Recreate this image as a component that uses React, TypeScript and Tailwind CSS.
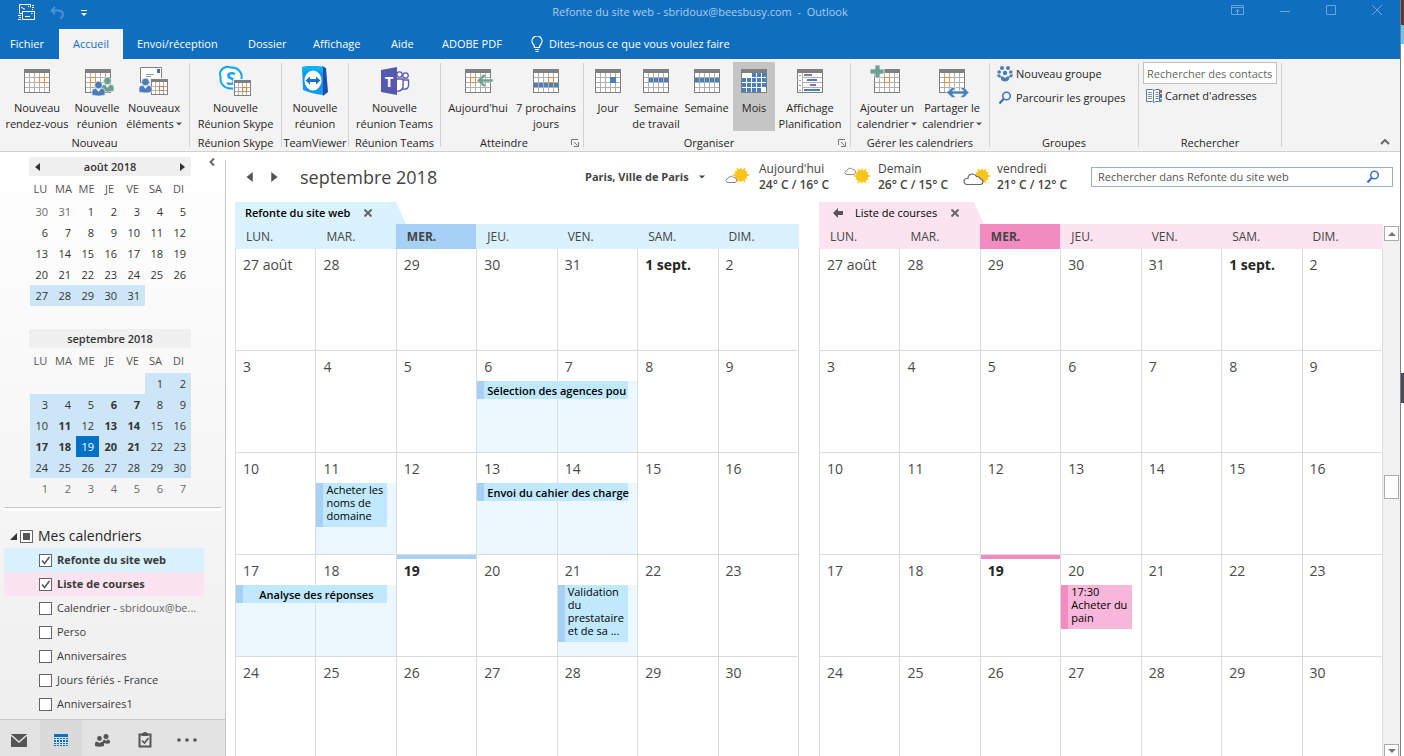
import { useState, type ReactNode } from "react";
import clsx from "clsx";

/* ---------- icons ---------- */

function Icon({ children }: { children: ReactNode }) {
  return (
    <svg viewBox="0 0 32 32" className="size-8 shrink-0 overflow-visible" aria-hidden="true">
      {children}
    </svg>
  );
}

function Sheet({ x = 3, y = 4 }: { x?: number; y?: number }) {
  return (
    <g shapeRendering="crispEdges">
      <rect x={x + 0.5} y={y + 0.5} width="25" height="23" fill="#fff" stroke="#7f7f7f" />
      <rect x={x} y={y} width="26" height="4" fill="#7f7f7f" />
      {[5, 10, 15, 20].map((n) => (
        <rect key={n} x={x + n} y={y + 4} width="1" height="19" fill="#b0b0b0" />
      ))}
      {[8, 13, 18].map((n) => (
        <rect key={n} x={x + 1} y={y + n} width="24" height="1" fill="#b0b0b0" />
      ))}
    </g>
  );
}

function SmallSheet({ x, y }: { x: number; y: number }) {
  return (
    <g shapeRendering="crispEdges">
      <rect x={x - 1} y={y - 1} width="19" height="18" fill="#f3f3f3" />
      <rect x={x + 0.5} y={y + 0.5} width="16" height="15" fill="#fff" stroke="#7f7f7f" />
      <rect x={x} y={y} width="17" height="3" fill="#7f7f7f" />
      {[4, 8, 12].map((n) => (
        <rect key={n} x={x + n} y={y + 3} width="1" height="12" fill="#b0b0b0" />
      ))}
      {[7, 11].map((n) => (
        <rect key={n} x={x + 1} y={y + n} width="15" height="1" fill="#b0b0b0" />
      ))}
      <rect x={x + 8.5} y={y + 7.5} width="4" height="4" fill="#fff" stroke="#e07b39" />
    </g>
  );
}

function Mark({ x, y }: { x: number; y: number }) {
  return (
    <rect x={x} y={y} width="5" height="5" fill="#fff" stroke="#ed8a3f" shapeRendering="crispEdges" />
  );
}

function Person({ x, y, fill }: { x: number; y: number; fill: string }) {
  return (
    <g fill={fill} stroke="#f3f3f3" strokeWidth="0.6">
      <path d={`M${x} ${y + 14}v-3.500q0-3 3-3h1.200l2.300 3 2.300-3h1.200q3 0 3 3v3.500q-6.500 2-13 0z`} />
      <circle cx={x + 6.5} cy={y + 4} r="3.8" />
    </g>
  );
}

function Cells({ cells }: { cells: number[][] }) {
  return (
    <g fill="#4a80ba" shapeRendering="crispEdges">
      {cells.map(([c, r]) => (
        <rect key={`${c}-${r}`} x={4 + c * 5} y={8 + r * 5} width="4" height="4" />
      ))}
    </g>
  );
}

function AppointmentIcon() {
  return (
    <Icon>
      <Sheet />
      <Mark x={18.5} y={12.5} />
    </Icon>
  );
}

function MeetingIcon() {
  return (
    <Icon>
      <Sheet x={4} />
      <Mark x={9.5} y={12.5} />
      <Person x={20} y={12} fill="#6f9f92" />
      <Person x={11} y={16} fill="#4a7db8" />
    </Icon>
  );
}

function NewItemsIcon() {
  return (
    <Icon>
      <path d="M2.500 2.500h21v15h-21z" fill="#fff" stroke="#7f7f7f" />
      <path d="M19 4h3v4h-3z" fill="#3d74b5" />
      <path d="M8 9.500h8M8 11.500h5" stroke="#9a9a9a" />
      <SmallSheet x={13} y={14} />
      <Person x={1} y={13} fill="#4a7db8" />
    </Icon>
  );
}

function SkypeIcon() {
  return (
    <Icon>
      <g transform="translate(-4 0)">
        <path
          d="M9 2.300c2-1 4-.6 5.500.3 7-.8 12.200 4.700 11 11.400 2 4.500-.2 8.800-4.800 10-2 .5-3.600 0-4.700-.7C9 24.200 3.700 19 4.600 12 2.800 8 4.800 4 9 2.300z"
          fill="#fff"
          stroke="#12a5e8"
          strokeWidth="2"
        />
        <text x="15" y="19.500" textAnchor="middle" fontSize="18" fontWeight="700" fill="#12a5e8" fontFamily="Open Sans, sans-serif">
          S
        </text>
      </g>
      <SmallSheet x={14} y={15} />
    </Icon>
  );
}

function TeamViewerIcon() {
  return (
    <Icon>
      <path d="M23 1l4 2 2 24-5 4z" fill="#1b4fa8" />
      <path d="M3 2q11-2 21 0v28q-11-1-20-5z" fill="#1497ec" />
      <path d="M3 2q11-2 21 0v5q-11-3-21 0z" fill="#0cb0f5" />
      <ellipse cx="14" cy="15.500" rx="8.500" ry="10" fill="#fff" />
      <path d="M6.500 15.500l4.500-4v2.500h6v-2.500l4.500 4-4.500 4V17h-6v2.500z" fill="#1a73c9" />
    </Icon>
  );
}

function TeamsIcon() {
  return (
    <Icon>
      <g fill="#fff" stroke="#5558af" strokeWidth="1.300">
        <circle cx="20.500" cy="9.500" r="2.700" />
        <circle cx="26.500" cy="10.500" r="2.700" />
        <path d="M23.500 15h6v6q-1 4-6 3z" />
        <path d="M16 14h8v8q-1 5-8 4z" />
      </g>
      <path d="M2 5l16-3v28L2 27z" fill="#5558af" />
      <text x="10" y="21.500" textAnchor="middle" fontSize="15" fontWeight="700" fill="#fff" fontFamily="Open Sans, sans-serif">
        T
      </text>
    </Icon>
  );
}

function TodayIcon() {
  return (
    <Icon>
      <Sheet />
      <Mark x={8.5} y={12.5} />
      <path d="M15 15.500l6-6h4l-4.500 4.500H31v3H20.500L25 21.500h-4z" fill="#6f9f92" stroke="#f3f3f3" strokeWidth="0.500" />
    </Icon>
  );
}

function NextDaysIcon() {
  return (
    <Icon>
      <Sheet />
      <Cells cells={[[0, 2], [1, 2], [2, 2], [3, 2], [4, 2]]} />
      <Mark x={18.5} y={12.5} />
    </Icon>
  );
}

function DayIcon() {
  return (
    <Icon>
      <Sheet />
      <rect x="18" y="12" width="6" height="6" fill="#4a80ba" />
    </Icon>
  );
}

function WorkWeekIcon() {
  return (
    <Icon>
      <Sheet />
      <Cells cells={[[1, 1], [2, 1], [3, 1], [4, 1]]} />
    </Icon>
  );
}

function WeekIcon() {
  return (
    <Icon>
      <Sheet />
      <Cells cells={[[0, 1], [1, 1], [2, 1], [3, 1], [4, 1]]} />
    </Icon>
  );
}

function MonthIcon() {
  return (
    <Icon>
      <Sheet />
      <g fill="#fff" shapeRendering="crispEdges">
        <rect x="4" y="8" width="24" height="19" />
      </g>
      <Cells
        cells={[
          [2, 0], [3, 0], [4, 0],
          [0, 1], [1, 1], [2, 1], [3, 1], [4, 1],
          [0, 2], [1, 2], [2, 2], [3, 2], [4, 2],
          [0, 3], [1, 3], [2, 3], [3, 3],
        ]}
      />
    </Icon>
  );
}

function ScheduleIcon() {
  return (
    <Icon>
      <g shapeRendering="crispEdges">
        <path d="M3.500 4.500h25v23h-25z" fill="#fff" stroke="#7f7f7f" />
        <path d="M3 4h26v4H3z" fill="#7f7f7f" />
        <path d="M8.500 8v19M8 12.500h20M8 17.500h20M8 22.500h20" stroke="#b0b0b0" />
        <path d="M5 10.500h2M5 15.500h2M5 20.500h2M5 25.500h2" stroke="#9a9a9a" />
        <path d="M10 10h8M16 20h6" stroke="#8b6fb5" strokeWidth="2" />
        <path d="M13 15h10M10 25h16" stroke="#4a80ba" strokeWidth="2" />
      </g>
    </Icon>
  );
}

function AddCalendarIcon() {
  return (
    <Icon>
      <Sheet />
      <Mark x={13.5} y={12.5} />
      <path d="M-1 4h5V0h5v4h4v5H9v4H4V9h-5z" fill="#6f9f92" stroke="#f3f3f3" strokeWidth="0.800" />
    </Icon>
  );
}

function ShareCalendarIcon() {
  return (
    <Icon>
      <Sheet />
      <Mark x={8.5} y={12.5} />
      <path
        d="M10.500 27.500L16 22.500h4l-3.500 3.500h11L24 22.500h4l5 5-5 5h-4l3.500-3.500h-11l3.500 3.500h-4z"
        fill="#4a80ba"
        stroke="#f3f3f3"
        strokeWidth="0.600"
      />
    </Icon>
  );
}

function Magnifier({ className }: { className?: string }) {
  return (
    <svg viewBox="0 0 14 14" className={clsx("shrink-0", className)} aria-hidden="true">
      <circle cx="8.500" cy="5" r="3.800" fill="none" stroke="#3f74b3" strokeWidth="1.500" />
      <path d="M5.800 7.800L1.500 12.500" stroke="#3f74b3" strokeWidth="2.200" />
    </svg>
  );
}

function GroupIcon() {
  return (
    <svg viewBox="0 0 16 16" className="size-4 shrink-0" fill="#4a7db8" aria-hidden="true">
      <circle cx="5" cy="2" r="2" />
      <circle cx="11" cy="2" r="2" />
      <circle cx="2.200" cy="6" r="1.800" />
      <circle cx="13.800" cy="6" r="1.800" />
      <circle cx="8" cy="7" r="2.200" />
      <path d="M0 8.500h3l1 2v1H2q-2-1-2-3zM16 8.500h-3l-1 2v1h2q2-1 2-3zM4 10.500h2l2 1.500 2-1.500h2v3q-1 2-4 2t-4-2z" />
    </svg>
  );
}

function BookIcon() {
  return (
    <svg viewBox="0 0 16 14" className="h-3.5 w-4 shrink-0" aria-hidden="true">
      <path d="M.5 .5h6l1.500 1 1.500-1h4v12h-4l-1.500 1-1.500-1h-6z" fill="#fff" stroke="#4a7db8" />
      <path d="M7.500 1.500v11" stroke="#4a7db8" />
      <path d="M2 3.500h4M2 5.500h4M2 7.500h4M2 9.500h4M9.500 3.500h3M9.500 5.500h3M9.500 7.500h3M9.500 9.500h3" stroke="#8a8a8a" />
      <path d="M14 1h2v3h-2z" fill="#d9532c" />
      <path d="M14 5h2v4h-2z" fill="#3d74b5" />
      <path d="M14 10h2v3h-2z" fill="#6f9f92" />
    </svg>
  );
}

function Triangle({ dir, className }: { dir: "left" | "right" | "up" | "down"; className?: string }) {
  const d = {
    left: "M7 0v8L2 4z",
    right: "M1 0v8l5-4z",
    up: "M0 6h8L4 2z",
    down: "M0 2h8L4 6z",
  }[dir];
  return (
    <svg viewBox="0 0 8 8" className={clsx("shrink-0 fill-current", className)} aria-hidden="true">
      <path d={d} />
    </svg>
  );
}

/* twelve-ray sun: long and short points alternate round the disc */
function Sun({ x, y, r }: { x: number; y: number; r: number }) {
  const points = Array.from({ length: 24 }, (_, i) => {
    const a = (i * Math.PI) / 12;
    const d = i % 2 ? r * 0.6 : i % 4 ? r * 0.85 : r;
    return `${(x + d * Math.cos(a)).toFixed(2)},${(y + d * Math.sin(a)).toFixed(2)}`;
  }).join(" ");
  return (
    <g fill="#fcc419">
      <polygon points={points} />
      <circle cx={x} cy={y} r={r * 0.65} />
    </g>
  );
}

function WeatherIcon({ kind }: { kind: "low" | "high" | "cloudy" }) {
  return (
    <svg viewBox="0 0 28 20" className="h-5 w-7 shrink-0" aria-hidden="true">
      {kind === "low" && (
        <>
          <Sun x={16} y={8} r={9} />
          <path d="M3 15.500a2 2 0 010-4 3.500 3.500 0 016-1A2.600 2.600 0 0110 15.500z" fill="#fff" stroke="#8a8a8a" />
        </>
      )}
      {kind === "high" && (
        <>
          <Sun x={18} y={9} r={9} />
          <path d="M3 7.500a2 2 0 010-4 3.500 3.500 0 016-1A2.600 2.600 0 0110 7.500z" fill="#fff" stroke="#8a8a8a" />
        </>
      )}
      {kind === "cloudy" && (
        <>
          <Sun x={19} y={9} r={9} />
          <path d="M4 17.500a3 3 0 010-6h1a4.500 4.500 0 018.500-2 4 4 0 014 2.500q2.500.5 2.500 2.800t-2.500 2.700z" fill="#fff" stroke="#6a6a6a" strokeWidth="1.200" />
        </>
      )}
    </svg>
  );
}

/* ---------- ribbon ---------- */

function BigButton({
  icon,
  lines,
  width,
  menu,
  active,
}: {
  icon: ReactNode;
  lines: string[];
  width: string;
  menu?: boolean;
  active?: boolean;
}) {
  return (
    <button
      type="button"
      className={clsx(
        "flex h-[69px] flex-col items-center pt-[3px] text-[11px] leading-4 whitespace-nowrap text-[#262626]",
        active ? "bg-[#c5c5c5]" : "hover:bg-[#dcdcdc]",
        width
      )}
    >
      {icon}
      <span className="mt-[3px]">{lines[0]}</span>
      {lines[1] && (
        <span className="flex items-center gap-0.5">
          {lines[1]}
          {menu && <Triangle dir="down" className="size-1.5 text-[#555]" />}
        </span>
      )}
    </button>
  );
}

function Group({
  label,
  width,
  launcher,
  children,
}: {
  label: string;
  width: string;
  launcher?: boolean;
  children: ReactNode;
}) {
  return (
    <section className={clsx("my-1 flex shrink-0 flex-col border-r border-[#d2d2d2]", width)}>
      <div className="-mt-px flex h-[73px] shrink-0">{children}</div>
      <div className="flex h-4 shrink-0 items-center text-[11px] leading-4 text-[#262626]">
        <span className="flex-1 text-center whitespace-nowrap">{label}</span>
        {launcher && (
          <button type="button" aria-label={`Options ${label}`} className="w-4">
            <svg viewBox="0 0 8 8" className="mx-1 size-2" fill="none" stroke="#777" aria-hidden="true">
              <path d="M.5 6V.5H7M3 3l3.500 3.500M7.500 3v4.500H3" />
            </svg>
          </button>
        )}
      </div>
    </section>
  );
}

function Ribbon() {
  return (
    <div className="flex h-[93px] shrink-0 border-b border-[#d0d0d0] bg-[#f3f3f3]">
      <Group label="Nouveau" width="w-[190px]">
        <BigButton icon={<AppointmentIcon />} lines={["Nouveau", "rendez-vous"]} width="w-[74px]" />
        <BigButton icon={<MeetingIcon />} lines={["Nouvelle", "réunion"]} width="w-[46px]" />
        <BigButton icon={<NewItemsIcon />} lines={["Nouveaux", "éléments"]} width="w-[68px]" menu />
      </Group>
      <Group label="Réunion Skype" width="w-[92px]">
        <BigButton icon={<SkypeIcon />} lines={["Nouvelle", "Réunion Skype"]} width="w-full" />
      </Group>
      <Group label="TeamViewer" width="w-[67px]">
        <BigButton icon={<TeamViewerIcon />} lines={["Nouvelle", "réunion"]} width="w-full" />
      </Group>
      <Group label="Réunion Teams" width="w-[92px]">
        <BigButton icon={<TeamsIcon />} lines={["Nouvelle", "réunion Teams"]} width="w-full" />
      </Group>
      <Group label="Atteindre" width="w-[143px]" launcher>
        <BigButton icon={<TodayIcon />} lines={["Aujourd'hui"]} width="w-[74px]" />
        <BigButton icon={<NextDaysIcon />} lines={["7 prochains", "jours"]} width="w-[62px]" />
      </Group>
      <Group label="Organiser" width="w-[267px]" launcher>
        <BigButton icon={<DayIcon />} lines={["Jour"]} width="w-[48px]" />
        <BigButton icon={<WorkWeekIcon />} lines={["Semaine", "de travail"]} width="w-[48px]" />
        <BigButton icon={<WeekIcon />} lines={["Semaine"]} width="w-[53px]" />
        <BigButton icon={<MonthIcon />} lines={["Mois"]} width="w-[42px]" active />
        <BigButton icon={<ScheduleIcon />} lines={["Affichage", "Planification"]} width="w-[70px]" />
      </Group>
      <Group label="Gérer les calendriers" width="w-[139px]">
        <BigButton icon={<AddCalendarIcon />} lines={["Ajouter un", "calendrier"]} width="w-[72px]" menu />
        <BigButton icon={<ShareCalendarIcon />} lines={["Partager le", "calendrier"]} width="w-[58px]" menu />
      </Group>
      <Group label="Groupes" width="w-[149px]">
        <div className="flex flex-col pl-[7px] text-[11px] leading-4 whitespace-nowrap text-[#262626]">
          <button type="button" className="flex h-6 items-center gap-[3px]">
            <GroupIcon />
            Nouveau groupe
          </button>
          <button type="button" className="flex h-6 items-center gap-[3px]">
            <Magnifier className="mx-px size-3.5" />
            Parcourir les groupes
          </button>
        </div>
      </Group>
      <Group label="Rechercher" width="w-[143px]">
        <div className="flex w-full flex-col px-1 text-[11px] text-[#262626]">
          <input
            type="text"
            aria-label="Rechercher des contacts"
            placeholder="Rechercher des contacts"
            className="h-[22px] w-full border border-[#c0c0c0] bg-white px-[3px] placeholder:text-[#666]"
          />
          <button type="button" className="flex h-6 items-center gap-[3px] pl-[3px]">
            <BookIcon />
            Carnet d'adresses
          </button>
        </div>
      </Group>
      <div className="flex flex-1 items-end justify-end pr-2.5 pb-1.5">
        <button type="button" aria-label="Réduire le ruban">
          <svg viewBox="0 0 10 6" className="h-1.5 w-2.5" fill="none" stroke="#666" strokeWidth="2" aria-hidden="true">
            <path d="M1 5l4-4 4 4" />
          </svg>
        </button>
      </div>
    </div>
  );
}

/* ---------- top bars ---------- */

function TitleBar() {
  return (
    <header className="flex h-[29px] shrink-0 items-start bg-[#106ebe] text-[11px] text-[#a9cdee]">
      <div className="flex flex-1 items-center gap-3.5 pt-1 pl-[18px]">
        <svg viewBox="0 0 18 17" className="h-[17px] w-[18px]" fill="none" stroke="#fff" aria-hidden="true">
          <path d="M1.500 .5h11v3M1.500 .5v9h3M3 3l3 2h1M10 2.500h1M14 1.500h2M14 3.500h2M14 5.500h1M4.500 7.500h12v8h-12zM7 12.500h5M13 9.500h1.500M0 11.500h3M1 13.500h2M0 15.500h3" />
        </svg>
        <svg viewBox="0 0 14 13" className="h-[13px] w-3.5" fill="none" stroke="#4a93d6" strokeWidth="1.800" aria-hidden="true">
          <path d="M5 1L1.500 4.500 5 8M2 4.500h6q5 0 5 4 0 3-3 4" />
        </svg>
        <svg viewBox="0 0 6 6" className="ml-[3px] size-1.5" fill="#fff" aria-hidden="true">
          <path d="M0 0h6v1H0zM0 3h6L3 6z" />
        </svg>
      </div>
      <h1 className="pt-1 leading-4 whitespace-pre">Refonte du site web - sbridoux@beesbusy.com  -  Outlook</h1>
      <div className="flex flex-1 items-center justify-end gap-9 pt-1 pr-[18px]">
        <svg viewBox="0 0 13 11" className="mt-px h-[11px] w-[13px]" fill="none" stroke="#6aa6dc" aria-hidden="true">
          <path d="M.5.5h12v9H.5zM.5 2.500h12M6.500 9V4.500M4.500 6.500l2-2 2 2" />
        </svg>
        <svg viewBox="0 0 10 11" className="h-[11px] w-2.5" stroke="#6aa6dc" aria-hidden="true">
          <path d="M0 6.500h10" />
        </svg>
        <svg viewBox="0 0 10 10" className="size-2.5" fill="none" stroke="#6aa6dc" aria-hidden="true">
          <path d="M.5.5h9v9h-9z" />
        </svg>
        <svg viewBox="0 0 10 10" className="size-2.5" fill="none" stroke="#6aa6dc" aria-hidden="true">
          <path d="M0 0l10 10M10 0L0 10" />
        </svg>
      </div>
    </header>
  );
}

const tabs = [
  { label: "Envoi/réception", width: "w-[111px]" },
  { label: "Dossier", width: "w-[65px]" },
  { label: "Affichage", width: "w-[78px]" },
  { label: "Aide", width: "w-[51px]" },
  { label: "ADOBE PDF", width: "w-[89px]" },
];

function Tabs() {
  return (
    <nav className="flex h-[30px] shrink-0 bg-[#106ebe] text-left text-[11px] whitespace-nowrap text-white">
      <button type="button" className="w-[59px] pl-2.5 text-left">
        Fichier
      </button>
      <button type="button" className="w-16 bg-[#f3f3f3] text-center text-[#106ebe]">
        Accueil
      </button>
      {tabs.map((tab) => (
        <button key={tab.label} type="button" className={clsx("pl-3.5 text-left", tab.width)}>
          {tab.label}
        </button>
      ))}
      <button type="button" className="flex items-center gap-1.5 pl-3.5">
        <svg viewBox="0 0 12 17" className="h-[17px] w-3" fill="none" stroke="#fff" strokeWidth="1.200" aria-hidden="true">
          <path d="M3.500 11.500Q3.500 9.500 2 8a5 5 0 118 0q-1.500 1.500-1.500 3.500zM4 13.500h4M4.500 15.500h3" />
        </svg>
        Dites-nous ce que vous voulez faire
      </button>
    </nav>
  );
}

/* ---------- sidebar ---------- */

const august = [
  [30, 31, 1, 2, 3, 4, 5],
  [6, 7, 8, 9, 10, 11, 12],
  [13, 14, 15, 16, 17, 18, 19],
  [20, 21, 22, 23, 24, 25, 26],
  [27, 28, 29, 30, 31, 0, 0],
];

const september = [
  [0, 0, 0, 0, 0, 1, 2],
  [3, 4, 5, 6, 7, 8, 9],
  [10, 11, 12, 13, 14, 15, 16],
  [17, 18, 19, 20, 21, 22, 23],
  [24, 25, 26, 27, 28, 29, 30],
  [1, 2, 3, 4, 5, 6, 7],
];

const busyDays = [6, 7, 11, 13, 14, 17, 18, 20, 21];

function MiniMonth({ title, weeks, arrows }: { title: string; weeks: number[][]; arrows?: boolean }) {
  const isSeptember = weeks === september;

  const dayClass = (day: number, week: number) => {
    if (!day) return "";
    if (!isSeptember) {
      if (week === 4) return "bg-[#cde6f7] text-[#333]";
      return week === 0 && day > 20 ? "text-[#6a6a6a]" : "text-[#333]";
    }
    if (week === 5) return "text-[#6a6a6a]";
    if (day === 19) return "bg-[#0072c6] text-white";
    return clsx("bg-[#cde6f7] text-[#333]", busyDays.includes(day) && "font-bold");
  };

  return (
    <div className="ml-[29px] w-[162px]">
      <div className="flex h-[19px] items-center justify-between bg-[#f0f0f0] px-1 text-[#333]">
        {arrows ? (
          <button type="button" aria-label="Mois précédent">
            <Triangle dir="left" className="size-2" />
          </button>
        ) : (
          <span />
        )}
        <span className="text-[11px] leading-4 font-semibold">{title}</span>
        {arrows ? (
          <button type="button" aria-label="Mois suivant">
            <Triangle dir="right" className="size-2" />
          </button>
        ) : (
          <span />
        )}
      </div>
      <table className="ml-px w-[161px] table-fixed border-collapse text-[11px] leading-4">
        <thead>
          <tr className="h-[25px] text-[#555]">
            {["LU", "MA", "ME", "JE", "VE", "SA", "DI"].map((d) => (
              <th key={d} className="p-0 pr-0.5 text-center font-normal">
                {d}
              </th>
            ))}
          </tr>
        </thead>
        <tbody>
          {weeks.map((week, w) => (
            <tr key={w} className="h-[21px]">
              {week.map((day, i) => (
                <td key={i} className={clsx("p-0 pr-[5px] text-right", dayClass(day, w))}>
                  {day || ""}
                </td>
              ))}
            </tr>
          ))}
        </tbody>
      </table>
    </div>
  );
}

const calendars = [
  { name: "Refonte du site web", row: "bg-[#daf1fe] font-bold", checked: true },
  { name: "Liste de courses", row: "bg-[#fbe4f0] font-bold", checked: true },
  { name: "Calendrier - ", extra: "sbridoux@be...", row: "" },
  { name: "Perso", row: "" },
  { name: "Anniversaires", row: "" },
  { name: "Jours fériés - France", row: "" },
  { name: "Anniversaires1", row: "" },
];

function CalendarRow({ name, extra, row, checked }: { name: string; extra?: string; row: string; checked?: boolean }) {
  const [on, setOn] = useState(!!checked);
  return (
    <label className={clsx("ml-1 flex h-6 w-[200px] items-center gap-[5px] pl-[35px] text-[11px] whitespace-nowrap text-[#3b3b3b]", row)}>
      <span className="grid shrink-0 *:col-start-1 *:row-start-1">
        <input
          type="checkbox"
          checked={on}
          onChange={() => setOn(!on)}
          className="size-[13px] appearance-none border border-[#666] bg-white"
        />
        {on && (
          <svg viewBox="0 0 13 13" className="pointer-events-none size-[13px]" fill="none" stroke="#555" strokeWidth="1.500" aria-hidden="true">
            <path d="M3 6.500L5.500 9.500 10.500 3" />
          </svg>
        )}
      </span>
      <span>
        {name}
        {extra && <span className="text-[#666]">{extra}</span>}
      </span>
    </label>
  );
}

function Sidebar() {
  return (
    <aside className="flex w-[226px] shrink-0 flex-col overflow-hidden">
      <div className="flex min-h-0 flex-1 flex-col bg-linear-to-b from-white to-[#efefef]">
        <div className="flex h-[355px] shrink-0">
          <div className="flex flex-col gap-[23px] pt-[5px]">
            <MiniMonth title="août 2018" weeks={august} arrows />
            <MiniMonth title="septembre 2018" weeks={september} />
          </div>
          <div className="mt-2 flex flex-1 justify-end border-r border-[#c8c8c8] pr-2.5">
            <button type="button" aria-label="Réduire le volet" className="-mt-1 h-3">
              <svg viewBox="0 0 6 8" className="h-2 w-1.5" fill="none" stroke="#666" strokeWidth="2" aria-hidden="true">
                <path d="M5 .5L1.500 4 5 7.500" />
              </svg>
            </button>
          </div>
        </div>
        <div className="flex flex-1 flex-col border-r border-[#c8c8c8]">
          <div className="mx-1 h-1 shrink-0 border-t border-[#c8c8c8] bg-white" />
          <div className="mt-[13px] flex h-6 shrink-0 items-center pl-2.5">
            <svg viewBox="0 0 7 7" className="size-[7px]" aria-hidden="true">
              <path d="M7 0v7H0z" fill="#333" />
            </svg>
            <label className="flex items-center gap-[5px] pl-[3px] text-sm text-[#262626]">
              <span className="grid *:col-start-1 *:row-start-1">
                <input type="checkbox" className="size-[13px] appearance-none border border-[#666] bg-white" />
                <span className="pointer-events-none m-[3px] bg-[#555]" />
              </span>
              Mes calendriers
            </label>
          </div>
          {calendars.map((c) => (
            <CalendarRow key={c.name} {...c} />
          ))}
        </div>
      </div>
      <nav className="flex h-[37px] shrink-0 border-t border-r border-[#c8c8c8] bg-[#e3e3e3] pt-1 *:grid *:w-[42px] *:place-items-center">
        <button type="button" aria-label="Courrier" className="-ml-0.5">
          <svg viewBox="0 0 16 13" className="h-[13px] w-4" aria-hidden="true">
            <path d="M0 0h16v13H0z" fill="#555" />
            <path d="M0 1l8 7 8-7" fill="none" stroke="#e6e6e6" strokeWidth="1.400" />
          </svg>
        </button>
        <button type="button" aria-label="Calendrier" className="-mt-1 bg-[#dadada] pt-1">
          <svg viewBox="0 0 14 13" className="h-[13px] w-3.5" fill="#0072c6" shapeRendering="crispEdges" aria-hidden="true">
            <path d="M0 0h14v3H0z" />
            {[4, 6, 9, 11].map((y) => [0, 3, 6, 9, 12].map((x) => <rect key={`${x}-${y}`} x={x} y={y} width="2" height={y === 6 ? 2 : 1} />))}
          </svg>
        </button>
        <button type="button" aria-label="Contacts">
          <svg viewBox="0 0 16 13" className="h-[13px] w-4" fill="#555" aria-hidden="true">
            <circle cx="11" cy="2.500" r="2.500" />
            <circle cx="4.500" cy="4.500" r="2.400" />
            <path d="M8 9V7q0-1.500 1.500-1.500L11 7l1.500-1.500Q15 5.500 15 7.500V9q-3 1.500-6 0zM0 12V9.500Q0 8 1.500 7.500L4.500 9l3-1.500Q9 8 9 9.500V12q-4.500 1.500-9 0z" />
          </svg>
        </button>
        <button type="button" aria-label="Tâches">
          <svg viewBox="0 0 14 16" className="h-4 w-3.5" fill="none" stroke="#555" strokeWidth="2" aria-hidden="true">
            <path d="M1.500 2.500h11v12h-11z" />
            <path d="M4 2.500h6M7 0v2" strokeWidth="3" />
            <path d="M4 8.500l2.500 2.500L10.500 6" strokeWidth="1.600" />
          </svg>
        </button>
        <button type="button" aria-label="Autres">
          <svg viewBox="0 0 20 4" className="h-1 w-5" fill="#555" aria-hidden="true">
            <circle cx="2" cy="2" r="1.800" />
            <circle cx="10" cy="2" r="1.800" />
            <circle cx="18" cy="2" r="1.800" />
          </svg>
        </button>
      </nav>
    </aside>
  );
}

/* ---------- month view ---------- */

type CalEvent = { text: string; at: string; days: number[]; bold?: boolean; center?: boolean };

const weeks = [
  ["27 août", "28", "29", "30", "31", "1 sept.", "2"],
  ["3", "4", "5", "6", "7", "8", "9"],
  ["10", "11", "12", "13", "14", "15", "16"],
  ["17", "18", "19", "20", "21", "22", "23"],
  ["24", "25", "26", "27", "28", "29", "30"],
];

const dayColumns = [
  "col-start-1",
  "col-start-2",
  "col-start-3",
  "col-start-4",
  "col-start-5",
  "col-start-6",
  "col-start-7",
];

const siteEvents: Record<number, CalEvent[]> = {
  1: [{ text: "Sélection des agences pou", at: "col-start-4 col-span-2", days: [3, 4], bold: true }],
  2: [
    { text: "Acheter les noms de domaine", at: "col-start-2", days: [1] },
    { text: "Envoi du cahier des charge", at: "col-start-4 col-span-2", days: [3, 4], bold: true },
  ],
  3: [
    { text: "Analyse des réponses", at: "col-start-1 col-span-2", days: [0, 1], bold: true, center: true },
    { text: "Validation du prestataire et de sa ...", at: "col-start-5", days: [4] },
  ],
};

const shoppingEvents: Record<number, CalEvent[]> = {
  3: [{ text: "17:30\nAcheter du pain", at: "col-start-4", days: [] }],
};

const themes = {
  blue: { light: "bg-[#daf1fe]", fill: "fill-[#daf1fe]", strong: "bg-[#a6d1f5]", event: "border-[#a6d1f5] bg-[#c0e8ff]" },
  pink: { light: "bg-[#fbe4f0]", fill: "fill-[#fbe4f0]", strong: "bg-[#f28cc0]", event: "border-[#f28cc0] bg-[#f7b6da]" },
};

function Month({
  title,
  color,
  events,
  primary,
}: {
  title: string;
  color: "blue" | "pink";
  events: Record<number, CalEvent[]>;
  primary?: boolean;
}) {
  const theme = themes[color];
  return (
    <section className="flex min-w-0 flex-1 flex-col">
      <div className="flex h-[22px] shrink-0">
        <div className={clsx("flex items-center text-[11px] text-black", theme.light, primary ? "w-[161px] pl-2.5 font-semibold" : "w-[155px] pl-3.5")}>
          {!primary && (
            <svg viewBox="0 0 10 10" className="mr-3 h-2.5 w-2.5" fill="#555" aria-hidden="true">
              <path d="M0 5l5-5v3h5v4H5v3z" />
            </svg>
          )}
          <span className="whitespace-nowrap">{title}</span>
          <button type="button" aria-label={`Fermer ${title}`} className="ml-3.5">
            <svg viewBox="0 0 8 8" className="size-2" stroke="#666" strokeWidth="2" aria-hidden="true">
              <path d="M.5.5l7 7M7.500.5l-7 7" />
            </svg>
          </button>
        </div>
        <svg viewBox="0 0 10 22" className={clsx("h-[22px] w-2.5", theme.fill)} aria-hidden="true">
          <path d="M0 0l10 22H0z" />
        </svg>
      </div>
      <div className={clsx("grid h-[25px] shrink-0 grid-cols-7 items-stretch pr-px text-xs text-[#444]", theme.light)}>
        {["LUN.", "MAR.", "MER.", "JEU.", "VEN.", "SAM.", "DIM."].map((d, i) => (
          <div key={d} className={clsx("flex items-center pl-[11px]", i === 2 && `${theme.strong} font-bold`)}>
            {d}
          </div>
        ))}
      </div>
      <div className="min-h-0 flex-1 overflow-hidden border-r border-[#dcdcdc]">
        {weeks.map((days, w) => (
          <div key={w} className="grid h-[102px] grid-cols-7 grid-rows-[30px_1fr] border-b border-[#dcdcdc]">
            {days.map((day, i) => {
              const today = w === 3 && i === 2;
              const busy = events[w]?.some((e) => e.days.includes(i));
              return (
                <div key={day} className={clsx("row-span-2 row-start-1 flex min-w-0 flex-col border-l border-[#dcdcdc]", dayColumns[i])}>
                  <div
                    className={clsx(
                      "flex h-[30px] shrink-0 flex-col pl-[7px] text-sm leading-8 whitespace-nowrap",
                      today || day === "1 sept." ? "font-bold text-[#262626]" : "text-[#4a4a4a]"
                    )}
                  >
                    {today && <span className={clsx("-mb-1 -ml-[7px] h-1 shrink-0", theme.strong)} />}
                    {day}
                  </div>
                  {busy && <div className="flex-1 bg-[#ecf7fe]" />}
                </div>
              );
            })}
            {events[w]?.map((e) => (
              <div
                key={e.text}
                className={clsx(
                  "row-start-2 mr-[9px] ml-px self-start border-l-[7px] pl-[3px] text-[11px] leading-[13px] text-black",
                  theme.event,
                  e.at,
                  e.bold ? "h-[18px] pt-[3px] font-semibold whitespace-nowrap" : "pb-[5px] whitespace-pre-line",
                  e.center && "text-center"
                )}
              >
                {e.text}
              </div>
            ))}
          </div>
        ))}
      </div>
    </section>
  );
}

const forecast = [
  { day: "Aujourd'hui", temp: "24° C / 16° C", kind: "low" as const },
  { day: "Demain", temp: "26° C / 15° C", kind: "high" as const },
  { day: "vendredi", temp: "21° C / 12° C", kind: "cloudy" as const },
];

function MonthHeader() {
  return (
    <div className="flex h-[50px] shrink-0 items-center pr-[7px] pl-[18px] text-[#444]">
      <button type="button" aria-label="Précédent">
        <Triangle dir="left" className="size-2.5 text-[#555]" />
      </button>
      <button type="button" aria-label="Suivant" className="ml-4">
        <Triangle dir="right" className="size-2.5 text-[#555]" />
      </button>
      <h2 className="ml-5 w-[285px] text-lg leading-6 whitespace-nowrap">septembre 2018</h2>
      <button type="button" className="flex w-[140px] items-center gap-2.5 text-[11px] font-bold whitespace-nowrap">
        Paris, Ville de Paris
        <Triangle dir="down" className="size-1.5" />
      </button>
      {forecast.map((f) => (
        <div key={f.day} className="flex w-[119px] items-center gap-1.5 text-xs leading-4 whitespace-nowrap">
          <WeatherIcon kind={f.kind} />
          <div>
            <div>{f.day}</div>
            <div className="font-semibold">{f.temp}</div>
          </div>
        </div>
      ))}
      <div className="ml-[9px] flex h-5 min-w-0 flex-1 items-center border border-[#a0aebb] bg-white pr-3 pl-1.5">
        <input
          type="text"
          aria-label="Rechercher"
          placeholder="Rechercher dans Refonte du site web"
          className="min-w-0 flex-1 text-[11px] outline-none placeholder:text-[#555]"
        />
        <Magnifier className="size-3.5" />
      </div>
    </div>
  );
}

function ScrollBar() {
  return (
    <div className="mt-6 flex w-[17px] shrink-0 flex-col items-stretch bg-[#f2f2f2] px-px">
      <button type="button" aria-label="Défiler vers le haut" className="grid h-[15px] place-items-center border border-[#ababab] bg-white">
        <Triangle dir="up" className="size-2 text-[#777]" />
      </button>
      <div className="flex-23" />
      <div className="h-6 border border-[#ababab] bg-white" />
      <div className="flex-24" />
      <button type="button" aria-label="Défiler vers le bas" className="grid h-3 place-items-center border border-b-0 border-[#ababab] bg-white">
        <Triangle dir="down" className="size-2 text-[#777]" />
      </button>
    </div>
  );
}

export default function App() {
  return (
    <div className="flex h-screen overflow-hidden bg-white font-['Open_Sans','Noto_Sans',sans-serif]">
      <div className="flex min-w-0 flex-1 flex-col">
        <TitleBar />
        <Tabs />
        <Ribbon />
        <div className="flex min-h-0 flex-1">
          <Sidebar />
          <main className="flex min-w-0 flex-1 flex-col">
            <MonthHeader />
            <div className="flex min-h-0 flex-1 pl-[9px]">
              <div className="flex min-w-0 flex-1 gap-5">
                <Month title="Refonte du site web" color="blue" events={siteEvents} primary />
                <Month title="Liste de courses" color="pink" events={shoppingEvents} />
              </div>
              <ScrollBar />
            </div>
          </main>
        </div>
      </div>
      {/* window edge, with what lies behind it */}
      <div className="flex w-1 shrink-0 flex-col border-l border-[#7f7f7f] bg-white">
        <div className="h-[25px] bg-[#5a3a33]" />
        <div className="h-[19px] bg-[#6cc3f5]" />
        <div className="mt-[329px] h-[30px] bg-[#4a4a5c]" />
      </div>
    </div>
  );
}
